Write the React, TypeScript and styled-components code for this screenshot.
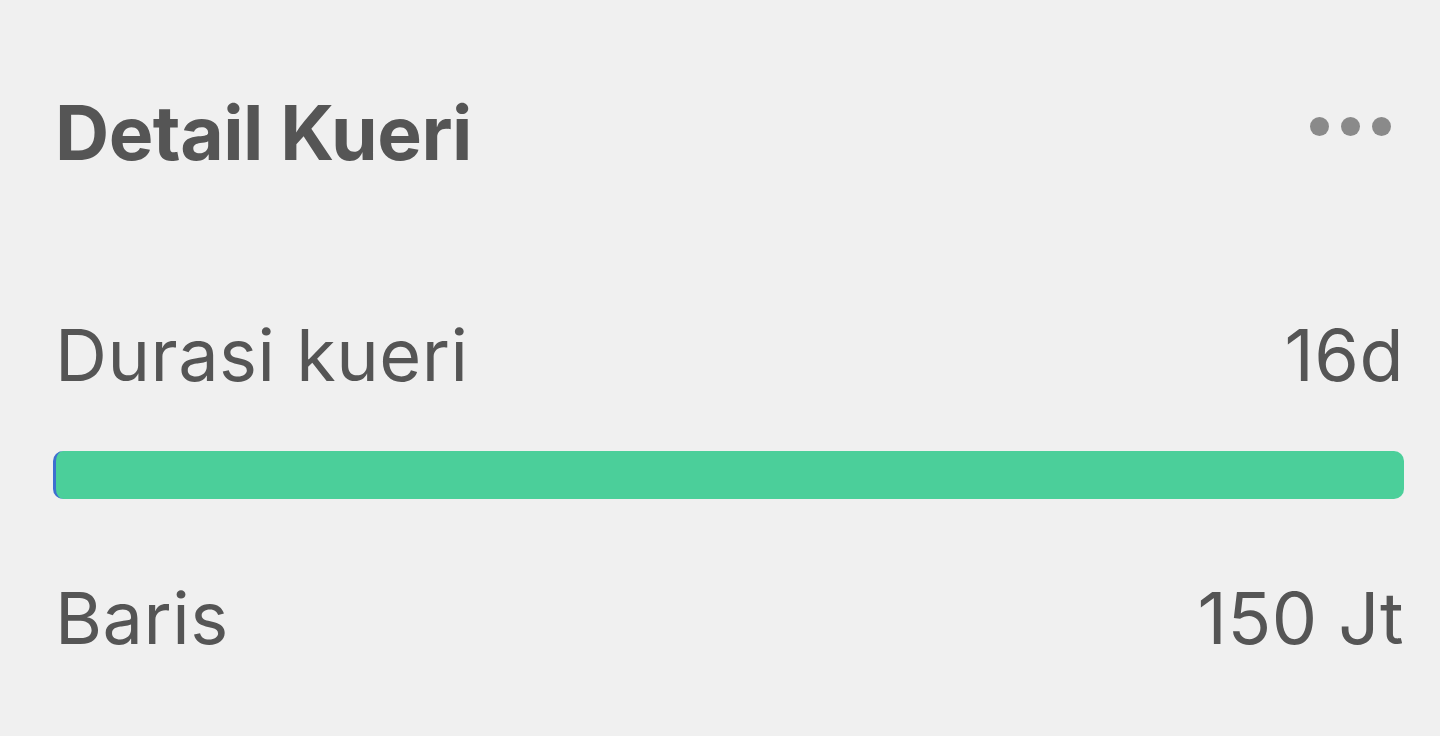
import React from "react";
import styled, { createGlobalStyle } from "styled-components";

const Global = createGlobalStyle`
  html, body { margin: 0; padding: 0; background: #f0f0f0; }
  body { font-family: Inter, "Noto Sans", sans-serif; }
`;

const Panel = styled.div`
  box-sizing: border-box;
  width: 1440px;
  height: 736px;
  padding: 88px 36px 0 53px;
  display: flex;
  flex-direction: column;
  color: #555555;
`;

const Header = styled.div`
  display: flex;
  align-items: center;
  justify-content: space-between;
  height: 90px;
`;

const Title = styled.h1`
  margin: 0 0 0 2px;
  font-size: 75px;
  font-weight: 700;
  letter-spacing: -0.5px;
  line-height: 90px;
`;

const Dots = styled.div`
  display: flex;
  gap: 12px;
  margin-right: 13px;
  margin-top: -14px;
`;

const Dot = styled.span`
  width: 19px;
  height: 19px;
  border-radius: 50%;
  background: #8a8a8a;
`;

const Row = styled.div<{ $top: number }>`
  display: flex;
  justify-content: space-between;
  align-items: baseline;
  margin-top: ${(p) => p.$top}px;
  padding: 0 0 0 2px;
  font-size: 72px;
  font-weight: 400;
  letter-spacing: 0.5px;
  line-height: 86px;
`;

const Bar = styled.div`
  margin-top: 53px;
  height: 48px;
  border-radius: 10px;
  background: #4bcf9a;
  border-left: 3px solid #3e6fd0;
  box-sizing: border-box;
`;

export default function App() {
  return (
    <>
      <Global />
      <Panel>
        <Header>
          <Title>Detail Kueri</Title>
          <Dots>
            <Dot />
            <Dot />
            <Dot />
          </Dots>
        </Header>
        <Row $top={134}>
          <span>Durasi kueri</span>
          <span>16d</span>
        </Row>
        <Bar />
        <Row $top={76}>
          <span>Baris</span>
          <span>150 Jt</span>
        </Row>
      </Panel>
    </>
  );
}
